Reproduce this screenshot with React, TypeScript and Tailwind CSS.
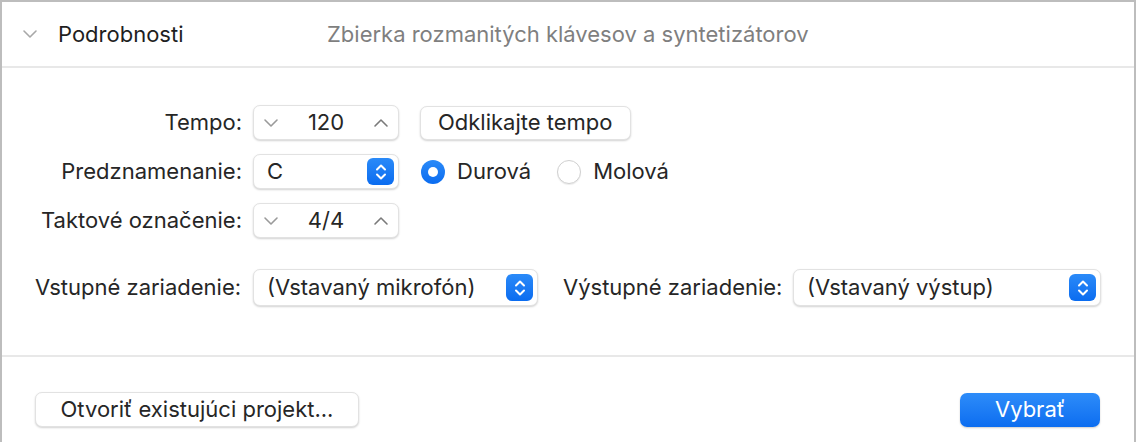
import React from "react";

const font = { fontFamily: "Inter, 'Liberation Sans', sans-serif" };

function ChevDown({ className = "" }: { className?: string }) {
  return (
    <svg width="16" height="10" viewBox="0 0 16 10" className={className}>
      <path d="M2 2 L8 8 L14 2" fill="none" stroke="currentColor" strokeWidth="1.6" strokeLinecap="round" strokeLinejoin="round" />
    </svg>
  );
}
function ChevUp({ className = "" }: { className?: string }) {
  return (
    <svg width="16" height="10" viewBox="0 0 16 10" className={className}>
      <path d="M2 8 L8 2 L14 8" fill="none" stroke="currentColor" strokeWidth="1.6" strokeLinecap="round" strokeLinejoin="round" />
    </svg>
  );
}

function BlueUpDown() {
  return (
    <div className="w-[27px] h-[27px] rounded-[6px] bg-gradient-to-b from-[#2a8af8] to-[#0a6cf0] flex items-center justify-center">
      <svg width="14" height="20" viewBox="0 0 14 20">
        <path d="M3 7.5 L7 3.5 L11 7.5" fill="none" stroke="white" strokeWidth="2" strokeLinecap="round" strokeLinejoin="round" />
        <path d="M3 12.5 L7 16.5 L11 12.5" fill="none" stroke="white" strokeWidth="2" strokeLinecap="round" strokeLinejoin="round" />
      </svg>
    </div>
  );
}

const boxCls =
  "bg-white rounded-[7px] border border-[#e2e2e2] shadow-[0_1px_2px_rgba(0,0,0,0.18)] flex items-center";

function Stepper({ value }: { value: string }) {
  return (
    <div className={boxCls + " h-[35px] w-[146px] justify-between px-[9px] text-[#262626]"}>
      <ChevDown className="text-[#9a9a9a]" />
      <span className="text-[22px]">{value}</span>
      <ChevUp className="text-[#7a7a7a]" />
    </div>
  );
}

function Select({ value, width, h = "h-[35px]" }: { value: string; width: string; h?: string }) {
  return (
    <div className={boxCls + " " + h + " " + width + " justify-between pl-[13px] pr-[4px] text-[#262626]"}>
      <span className="text-[22px]">{value}</span>
      <BlueUpDown />
    </div>
  );
}

function Label({ children }: { children: React.ReactNode }) {
  return <div className="text-[22px] text-[#262626] text-right whitespace-nowrap">{children}</div>;
}

export default function App() {
  return (
    <div style={font} className="w-[1136px] h-[442px] bg-white border-t-2 border-x-2 border-[#bdbdbd] flex flex-col overflow-hidden">
      <div className="h-[66px] shrink-0 flex items-center border-b-2 border-[#e8e8e8]">
        <ChevDown className="ml-[20px] text-[#a8a8a8]" />
        <span className="ml-[20px] w-[269px] text-[22px] text-[#1f1f1f]">Podrobnosti</span>
        <span className="text-[22px] text-[#7f7f7f]">Zbierka rozmanitých klávesov a syntetizátorov</span>
      </div>

      <div className="flex flex-col pt-[37px] h-[289px] border-b-2 border-[#e8e8e8] shrink-0">
        <div className="grid grid-cols-[240px_auto] gap-x-[11px] gap-y-[14px] items-center">
          <Label>Tempo:</Label>
          <div className="flex items-center gap-[21px]">
            <Stepper value="120" />
            <div className={boxCls + " h-[34px] px-[17px] text-[22px] text-[#262626]"}>Odklikajte tempo</div>
          </div>

          <Label>Predznamenanie:</Label>
          <div className="flex items-center">
            <Select value="C" width="w-[146px]" />
            <div className="ml-[22px] flex items-center gap-[12px]">
              <div className="w-[24px] h-[24px] rounded-full bg-gradient-to-b from-[#2a8af8] to-[#0a6cf0] flex items-center justify-center">
                <div className="w-[10px] h-[10px] rounded-full bg-white" />
              </div>
              <span className="text-[22px] text-[#262626]">Durová</span>
            </div>
            <div className="ml-[26px] flex items-center gap-[12px]">
              <div className="w-[24px] h-[24px] rounded-full bg-white border border-[#d0d0d0] shadow-[0_1px_1px_rgba(0,0,0,0.08)]" />
              <span className="text-[22px] text-[#262626]">Molová</span>
            </div>
          </div>

          <Label>Taktové označenie:</Label>
          <div className="flex items-center">
            <Stepper value="4/4" />
          </div>
        </div>

        <div className="mt-[31px] flex items-center pl-[33px]">
          <div className="w-[207px] text-[22px] text-[#262626] whitespace-nowrap">Vstupné zariadenie:</div>
          <div className="ml-[11px]">
            <Select value="(Vstavaný mikrofón)" width="w-[285px]" h="h-[37px]" />
          </div>
          <div className="ml-[25px] w-[218px] text-[22px] text-[#262626] whitespace-nowrap">Výstupné zariadenie:</div>
          <div className="ml-[12px]">
            <Select value="(Vstavaný výstup)" width="w-[308px]" h="h-[37px]" />
          </div>
        </div>
      </div>

      <div className="flex items-center justify-between pl-[33px] pr-[34px] pt-[35px]">
        <div className={boxCls + " h-[35px] w-[324px] justify-center text-[22px] text-[#262626]"}>Otvoriť existujúci projekt...</div>
        <div className="h-[34px] w-[140px] rounded-[7px] bg-gradient-to-b from-[#2d8cf9] to-[#0b6df0] shadow-[0_1px_2px_rgba(0,0,0,0.2)] flex items-center justify-center text-[22px] text-white">
          Vybrať
        </div>
      </div>
    </div>
  );
}
